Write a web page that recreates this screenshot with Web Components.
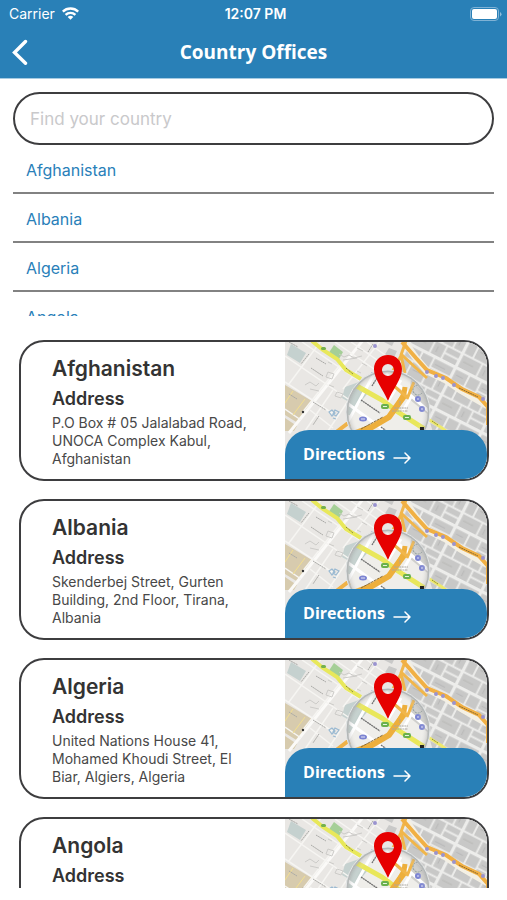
<!DOCTYPE html>
<html lang="en">
<head>
<meta charset="utf-8">
<meta name="viewport" content="width=device-width, initial-scale=1">
<title>Country Offices</title>
<style>
  body {
    margin: 0;
    background: white;
    color: #333;
    font-family: Inter, 'Liberation Sans', sans-serif;
  }
</style>
</head>
<body>

<offices-page>
  <status-bar slot="header" carrier="Carrier" time="12:07 PM"></status-bar>
  <nav-header slot="header">Country Offices</nav-header>

  <country-search slot="search" label="Find your country"></country-search>

  <country-item slot="countries">Afghanistan</country-item>
  <country-item slot="countries">Albania</country-item>
  <country-item slot="countries">Algeria</country-item>
  <country-item slot="countries">Angola</country-item>

  <office-card name="Afghanistan">P.O Box # 05 Jalalabad Road, UNOCA Complex Kabul, Afghanistan</office-card>
  <office-card name="Albania">Skenderbej Street, Gurten Building, 2nd Floor, Tirana, Albania</office-card>
  <office-card name="Algeria">United Nations House 41, Mohamed Khoudi Street, El Biar, Algiers, Algeria</office-card>
  <office-card name="Angola"></office-card>
</offices-page>

<script>
// The page: blue header, search box, short list of countries, office cards
//
class OfficesPage extends HTMLElement {
  constructor() {
    super();
    this.attachShadow({ mode: 'open' });
  }

  connectedCallback() {
    this.shadowRoot.innerHTML = `
      <style>
        :host {
          display: flex;
          flex-direction: column;
          height: 100vh;
          box-sizing: border-box;
          padding-bottom: 12px;
        }

        header {
          flex: none;
          background: #2980b7;
          border-bottom: 1px solid #a6cbe2;
        }

        .search {
          flex: none;
          padding: 13px 13px 0;
        }

        .countries {
          flex: none;
          height: 171px;
          margin: 0 13px;
          overflow-y: auto;
          scrollbar-width: none;
        }

        .offices {
          flex: 1;
          min-height: 0;
          display: flex;
          flex-direction: column;
          gap: 18px;
          margin-top: 24px;
          padding: 0 18px 0 19px;
          overflow-y: auto;
          scrollbar-width: none;
        }
      </style>

      <header><slot name="header"></slot></header>
      <div class="search"><slot name="search"></slot></div>
      <nav class="countries"><slot name="countries"></slot></nav>
      <main class="offices"><slot></slot></main>
    `;
  }
}

// Carrier, clock and battery
//
class StatusBar extends HTMLElement {
  constructor() {
    super();
    this.attachShadow({ mode: 'open' });
  }

  connectedCallback() {
    const carrier = this.getAttribute('carrier');
    const time = this.getAttribute('time');

    this.shadowRoot.innerHTML = `
      <style>
        :host {
          display: grid;
          grid-template-columns: 1fr auto 1fr;
          align-items: center;
          height: 27px;
          padding: 0 5px 0 9px;
          color: white;
          font-size: 14px;
        }

        .carrier {
          display: flex;
          align-items: center;
          gap: 7px;
        }

        .time {
          font-weight: 600;
        }

        .battery {
          justify-self: end;
        }

        svg {
          display: block;
        }
      </style>

      <span class="carrier">${carrier}
        <svg width="17" height="13" viewBox="0 0 17 13" fill="none" stroke="white" stroke-width="2.400">
          <path d="M.8 4.600a11 11 0 0 1 15.400 0"/>
          <path d="M3.600 7.900a7 7 0 0 1 9.800 0"/>
          <path d="M8.500 12.800 5.700 10a3.900 3.900 0 0 1 5.600 0z" fill="white" stroke="none"/>
        </svg>
      </span>
      <span class="time">${time}</span>
      <svg class="battery" width="32" height="14" viewBox="0 0 32 14">
        <rect x=".5" y=".5" width="28" height="13" rx="3.500" fill="none" stroke="#7fb2d5"/>
        <rect x="2" y="2" width="25" height="10" rx="2" fill="white"/>
        <path d="M30 5v4.500q1.500-.8 1.500-2.200T30 5" fill="#8fbddb"/>
      </svg>
    `;
  }
}

class NavHeader extends HTMLElement {
  constructor() {
    super();
    this.attachShadow({ mode: 'open' });
  }

  connectedCallback() {
    this.shadowRoot.innerHTML = `
      <style>
        :host {
          display: grid;
          grid-template-columns: 40px 1fr 40px;
          align-items: center;
          box-sizing: border-box;
          height: 51px;
          padding-bottom: 2px;
          color: white;
        }

        button {
          display: block;
          padding: 0 0 0 12px;
          border: none;
          background: none;
          cursor: pointer;
        }

        svg {
          display: block;
        }

        h1 {
          margin: 0;
          font-family: 'Open Sans', Lato, sans-serif;
          font-size: 19px;
          font-weight: 700;
          font-variant-ligatures: none;
          line-height: 24px;
          text-align: center;
        }
      </style>

      <button aria-label="Back">
        <svg width="17" height="26" viewBox="0 0 17 26" fill="none" stroke="white" stroke-width="3.400" stroke-linecap="round">
          <path d="M13.500 2.500 2.500 13.500 13.500 24.300"/>
        </svg>
      </button>
      <h1><slot></slot></h1>
    `;
  }
}

class CountrySearch extends HTMLElement {
  constructor() {
    super();
    this.attachShadow({ mode: 'open' });
  }

  connectedCallback() {
    const label = this.getAttribute('label');

    this.shadowRoot.innerHTML = `
      <style>
        :host {
          display: block;
        }

        input {
          display: block;
          box-sizing: border-box;
          width: 100%;
          height: 53px;
          padding: 0 15px;
          border: 2px solid #3d3d3f;
          border-radius: 27px;
          background: white;
          color: #333;
          font-family: inherit;
          font-size: 17px;
          outline: none;
        }

        input::placeholder {
          color: #c9c9cb;
        }
      </style>

      <input type="text" aria-label="${label}" placeholder="${label}">
    `;

    // Narrow the list of countries while the user types
    //
    const input = this.shadowRoot.querySelector('input');
    input.addEventListener('input', () => {
      const term = input.value.trim().toLowerCase();
      document.querySelectorAll('country-item').forEach(item => {
        item.hidden = !item.textContent.toLowerCase().includes(term);
      });
    });
  }
}

class CountryItem extends HTMLElement {
  constructor() {
    super();
    this.attachShadow({ mode: 'open' });
  }

  connectedCallback() {
    this.shadowRoot.innerHTML = `
      <style>
        :host {
          display: block;
          border-bottom: 2px solid #828282;
        }

        :host([hidden]) {
          display: none;
        }

        a {
          display: block;
          padding: 4px 13px 0;
          color: #2980b9;
          font-size: 16px;
          line-height: 43px;
          text-decoration: none;
        }
      </style>

      <a href="#"><slot></slot></a>
    `;
  }
}

// Street map with a magnifying lens and a red pin in the middle
//
class StreetMap extends HTMLElement {
  constructor() {
    super();
    this.attachShadow({ mode: 'open' });
  }

  connectedCallback() {
    this.shadowRoot.innerHTML = `
      <style>
        :host {
          display: block;
        }

        svg {
          display: block;
          width: 100%;
          height: 100%;
        }
      </style>

      <svg viewBox="0 0 202 137" preserveAspectRatio="xMidYMin slice" fill="none" aria-hidden="true">
        <defs>
          <pattern id="blocks" width="42" height="37" patternUnits="userSpaceOnUse" patternTransform="translate(124 2) rotate(27) scale(1.250)">
            <rect width="42" height="37" fill="#ededeb"/>
            <path fill="#c8c8c7" d="M1 1h11v9H1zM13.500 1h9v9h-9zM24 1h16.500v7H24zM1 11.500h7v12H1zM9.500 11.500h13v12h-13zM24 9.500h8v14h-8zM33.500 9.500h7v14h-7zM1 25h16v10.500H1zM18.500 25h9v10.500h-9zM29 25h11.500v4.500H29zM29 31h11.500v4.500H29z"/>
            <path stroke="#b2b2b1" stroke-width=".6" d="M3 5h6M26 5h9M12 17h7M3 30h9M36 15v5M22 28v5"/>
          </pattern>
          <clipPath id="glass"><circle cx="103" cy="70" r="40"/></clipPath>
          <radialGradient id="shade">
            <stop offset=".8" stop-color="#fff" stop-opacity="0"/>
            <stop offset="1" stop-color="#888" stop-opacity=".4"/>
          </radialGradient>
        </defs>

        <rect width="202" height="137" fill="#e9e7e4"/>
        <path fill="url(#blocks)" d="M119 0h83v137h-40l-18-60-28-45z"/>
        <path fill="#c9c9c8" d="m104 6 8 3-4 9-9-4zM99 0h10l-2 4z"/>

        <!-- Parks, water and the sand coloured quarter -->
        <path fill="#c5d1cf" d="m6 2 15 9-6 10L2 13z"/>
        <path fill="#c5d1cf" d="m60 45 14-5 4 6-12 15-9-5z"/>
        <path fill="#a5cf97" d="m49 3 9 7-5 9-10-7z"/>
        <path fill="#d7cbae" d="m0 43 27 16-14 22-13-8zM0 76l12 8-3 5H0z"/>

        <!-- White streets of the left part -->
        <path stroke="#fbfaf8" stroke-width="3" d="M79-3 4 91"/>
        <g stroke="#f6f5f2" stroke-width="1.500">
          <path d="M36-1 4 42M96-2 58 47M55 23 17 71M48 48 20 89M65 56 43 89M0 14l72 49M0 40l50 33M17 0l62 42M50 0l39 27M66 0l32 22M0 67l16 11M25 68l23 18M82 0l25 18"/>
        </g>
        <path stroke="#f3df8e" stroke-width="1" d="m8 49-8 12M20 57 8 73"/>

        <!-- Street names and outlines of buildings -->
        <g stroke="#a9a9a6" stroke-width="1" stroke-dasharray="2 .5">
          <path d="m4 0 9 5M31 16l10 6M26 26l12 8M28 60l13 8M4 52l8 5M34 74l-6 9M24 12l-8 10M88 2l-5 8"/>
        </g>
        <g stroke="#cccbc8" stroke-width="1">
          <path d="m54 12 5 3 5-2 5 3 8-2M58 18l14-2M20 43l5-3 6 4 3-3M25 47l9 2M43 30l6 2-2 5-6-2zM52 50l6 2-2 4-6-2zM43 20l4 2M77 21l5 3M72 6l6 3M44 43l5 2M72 29l4 2"/>
        </g>
        <path stroke="#9bbad2" stroke-width="1.200" d="m44 70 3-2 3 3-3 3zM50 68l4 2-3 4-3-2zM48 76l3 1M87 30v5"/>
        <circle cx="18" cy="70" r="1.200" fill="#333"/>

        <!-- Yellow avenue -->
        <path stroke="#e8e85a" stroke-width="4" d="m27-1 11 9 14 9 9 11 15 9"/>
        <path stroke="#eee96c" stroke-width="3" d="m143 77 14 9 14 11"/>
        <path stroke="#8a8a38" stroke-width="1" stroke-dasharray="1.500 .5" d="m61 26 7 6M147 79l6 4"/>
        <rect x="36" y="5" width="5" height="3" rx="1.500" fill="#75b04f"/>
        <rect x="160" y="94" width="6" height="3" rx="1.500" fill="#75b04f"/>

        <!-- Orange main roads -->
        <path stroke="#f4f0e4" stroke-width="7" d="m119-1 12 17 11 13 19 9 16 11 26 15"/>
        <path stroke="#f1b64a" stroke-width="3" d="M121-1 116 13 120 31M117 12 102 40M116 12l15 14 11 10"/>
        <path stroke="#f1b044" stroke-width="4" d="m117 0 14 16 11 12 19 8 16 11 17 8 9 10v18"/>
        <path stroke="#8a6a30" stroke-width="1" stroke-dasharray="2 .5" d="m174 46 19 9"/>
        <path stroke="#efb248" stroke-width="4" d="m50 91 12-9 9-1"/>
        <g fill="#9a93cf">
          <circle cx="90" cy="4" r="2"/><circle cx="142" cy="30" r="2"/>
          <circle cx="151" cy="34" r="2"/><circle cx="158" cy="36" r="2"/>
          <circle cx="169" cy="43" r="2"/><circle cx="198" cy="57" r="2"/>
        </g>

        <!-- What shows through the lens, drawn larger -->
        <g clip-path="url(#glass)">
          <circle cx="103" cy="70" r="42" fill="#efeeea"/>
          <path fill="#c3d0cd" d="m60 52 15-8 8 7-18 22h-5z"/>
          <path fill="#cfcfcc" d="m126 38 17 17 3 20-22-18z"/>
          <path stroke="#fff" stroke-width="3" d="M90 30 60 85M62 61l45 33M101 32l45 39M126 55l-11 19M116 38l-17 28"/>
          <path stroke="#e9e75a" stroke-width="5" d="m70 43 27 15 16 12 36 23"/>
          <path stroke="#edaf3c" stroke-width="6" d="m65 93 22-8 17-10 10-14 6-8"/>
          <path stroke="#edaf3c" stroke-width="5" d="m114 61 5-9 1-7"/>
          <path stroke="#f1b64a" stroke-width="3" d="m129 40-7 17M102 38l21 18"/>
          <path stroke="#8a6a34" stroke-width="1" stroke-dasharray="3 .6" d="m76 87 22-12"/>
          <path stroke="#6f6f6f" stroke-width="1.300" stroke-dasharray="2 .5" d="m76 58 19 13M87 44l5-8M96 85l7 5"/>
          <path stroke="#aaa7a1" stroke-width="1" stroke-dasharray="2 .6" d="M109 66h14M107 69h16M115 59v4"/>
          <circle cx="133" cy="48" r="5" stroke="#899" stroke-dasharray="2 1"/>
          <g fill="#7c84d2">
            <ellipse cx="78" cy="77" rx="4" ry="2.500"/><circle cx="133" cy="57" r="3"/><circle cx="137" cy="67" r="3"/>
          </g>
          <g stroke="#fff" stroke-width=".8"><path d="M76 77h4M132 57h2M136 67h2"/></g>
          <g fill="#69b04d">
            <rect x="96" y="62" width="8" height="5" rx="2"/><rect x="118" y="73" width="8" height="5" rx="2"/>
          </g>
          <path stroke="#e5f4df" stroke-width="1" d="M98 64.500h4M120 75.500h4"/>
        </g>
        <circle cx="103" cy="70" r="41" fill="url(#shade)"/>
        <circle cx="103" cy="70" r="41" stroke="#b4b8b8" stroke-width="2"/>
        <circle cx="103" cy="70" r="42" stroke="#e4e6e6" stroke-width="1"/>
        <rect x="135" y="85" width="4" height="4" fill="#222"/>

        <path fill="#e60000" fill-rule="evenodd" d="M103 13c8 0 14 6 14 14 0 10-9 20-14 32-5-12-14-22-14-32 0-8 6-14 14-14zm0 9a6 6 0 1 0 0 12 6 6 0 0 0 0-12z"/>
      </svg>
    `;
  }
}

class OfficeCard extends HTMLElement {
  constructor() {
    super();
    this.attachShadow({ mode: 'open' });
  }

  connectedCallback() {
    const name = this.getAttribute('name');

    // An office without an address has nowhere to be directed to
    //
    const directions = this.textContent.trim() ? `
      <a href="#">Directions
        <svg width="18" height="12" viewBox="0 0 18 12" fill="none" stroke="white" stroke-width="1.500" stroke-linecap="round" stroke-linejoin="round">
          <path d="M1 6h16M12 1l5 5-5 5"/>
        </svg>
      </a>
    ` : '';

    this.shadowRoot.innerHTML = `
      <style>
        :host {
          flex: none;
          display: grid;
          grid-template-columns: 17fr 13fr;
          box-sizing: border-box;
          min-height: 141px;
          border: 2px solid #3d3d3f;
          border-radius: 25px;
          background: white;
          overflow: hidden;
        }

        .office {
          padding: 13px 24px 10px 31px;
        }

        h2, h3, p {
          margin: 0;
        }

        h2 {
          font-size: 21px;
          font-weight: 600;
          line-height: 28px;
        }

        h3 {
          margin-top: 4px;
          font-size: 18px;
          font-weight: 600;
          line-height: 24px;
        }

        p {
          margin-top: 3px;
          font-size: 14px;
          line-height: 18px;
          color: #484848;
        }

        .map {
          display: grid;
          grid-template: 100% / 100%;
          overflow: hidden;
        }

        street-map, a {
          grid-area: 1 / 1;
        }

        a {
          align-self: end;
          display: flex;
          align-items: center;
          gap: 8px;
          height: 49px;
          box-sizing: border-box;
          padding: 0 18px 2px;
          border-radius: 24px 24px 0 0;
          background: #2980b7;
          color: white;
          font-family: 'Open Sans', Lato, sans-serif;
          font-size: 16px;
          font-weight: 700;
          text-decoration: none;
        }

        a svg {
          margin-top: 8px;
        }
      </style>

      <div class="office">
        <h2>${name}</h2>
        <h3>Address</h3>
        <p><slot></slot></p>
      </div>
      <div class="map">
        <street-map></street-map>
        ${directions}
      </div>
    `;
  }
}

// Register the custom elements
//
customElements.define('offices-page', OfficesPage);
customElements.define('status-bar', StatusBar);
customElements.define('nav-header', NavHeader);
customElements.define('country-search', CountrySearch);
customElements.define('country-item', CountryItem);
customElements.define('street-map', StreetMap);
customElements.define('office-card', OfficeCard);
</script>
</body>
</html>
